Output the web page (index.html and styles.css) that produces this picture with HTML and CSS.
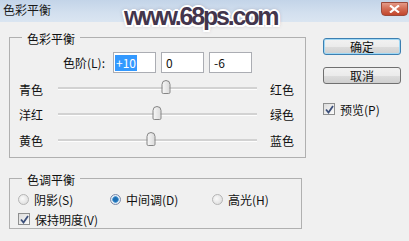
FILE: index.html
```html
<!DOCTYPE html>
<html lang="zh-CN">
<head>
    <meta charset="UTF-8">
    <title>色彩平衡</title>
    <link rel="stylesheet" href="styles.css">
</head>
<body>
    <div class="window">
        <div class="titlebar">
            <span class="title">色彩平衡</span>
            <button class="close-btn" aria-label="关闭">
                <svg width="11" height="8" viewBox="0 0 11 8"><path d="M1 0.5 L10 7.5 M10 0.5 L1 7.5" stroke="#fff" stroke-width="2.2"/></svg>
            </button>
        </div>
        <div class="watermark">www.68ps.com</div>

        <div class="main">
            <div class="left-col">
                <fieldset class="group group-color">
                    <legend>色彩平衡</legend>
                    <div class="levels-row">
                        <span class="levels-label">色阶(L):</span>
                        <div class="field"><span class="selected">+10</span></div>
                        <div class="field">0</div>
                        <div class="field">-6</div>
                    </div>

                    <div class="slider-row">
                        <span class="slider-label">青色</span>
                        <div class="track"><span class="thumb" style="left: 54.3%"></span></div>
                        <span class="slider-label right">红色</span>
                    </div>
                    <div class="slider-row">
                        <span class="slider-label">洋红</span>
                        <div class="track"><span class="thumb" style="left: 49.7%"></span></div>
                        <span class="slider-label right">绿色</span>
                    </div>
                    <div class="slider-row">
                        <span class="slider-label">黄色</span>
                        <div class="track"><span class="thumb" style="left: 46.7%"></span></div>
                        <span class="slider-label right">蓝色</span>
                    </div>
                </fieldset>

                <fieldset class="group group-tone">
                    <legend>色调平衡</legend>
                    <div class="radio-row">
                        <label class="radio-item shadows"><span class="radio"></span>阴影(S)</label>
                        <label class="radio-item midtones"><span class="radio checked"></span>中间调(D)</label>
                        <label class="radio-item"><span class="radio"></span>高光(H)</label>
                    </div>
                    <label class="check-row">
                        <span class="checkbox"><svg width="9" height="9" viewBox="0 0 9 9"><path d="M1 4.5 L3.5 7.5 L8 1" fill="none" stroke="#3c4f7a" stroke-width="1.8"/></svg></span>保持明度(V)
                    </label>
                </fieldset>
            </div>

            <div class="right-col">
                <button class="btn btn-default">确定</button>
                <button class="btn">取消</button>
                <label class="check-row preview">
                    <span class="checkbox"><svg width="9" height="9" viewBox="0 0 9 9"><path d="M1 4.5 L3.5 7.5 L8 1" fill="none" stroke="#3c4f7a" stroke-width="1.8"/></svg></span>预览(P)
                </label>
            </div>
        </div>
    </div>
</body>
</html>
```

FILE: styles.css
```css
body {
    margin: 0;
    font-family: "Noto Sans CJK SC", "Liberation Sans", sans-serif;
    font-size: 12px;
    color: #111;
}
.window {
    position: relative;
    width: 409px;
    height: 241px;
    background: #f0f0f0;
    overflow: hidden;
}
.titlebar {
    display: flex;
    align-items: flex-start;
    height: 22px;
    padding-left: 3px;
    background: linear-gradient(#c3d4e8, #d3e0ef 60%, #dae5f1);
    box-sizing: border-box;
}
.title {
    line-height: 20px;
    color: #1a1a1a;
}
.close-btn {
    margin-left: auto;
    margin-top: 2px;
    margin-right: 1px;
    width: 27px;
    height: 14px;
    padding: 0;
    border: 1px solid #9b4a3c;
    border-radius: 0 0 4px 4px;
    background: linear-gradient(#e49a88, #d26a52 50%, #c2462c);
    display: flex;
    align-items: center;
    justify-content: center;
}
.watermark {
    position: absolute;
    top: 3px;
    left: 124px;
    font-family: "Liberation Sans", sans-serif;
    font-weight: bold;
    font-size: 25px;
    letter-spacing: -2.2px;
    line-height: 26px;
    color: #43354c;
    text-shadow:
        2px 0 #fff, -2px 0 #fff, 0 2px #fff, 0 -2px #fff,
        1.5px 1.5px #fff, -1.5px 1.5px #fff, 1.5px -1.5px #fff, -1.5px -1.5px #fff,
        0 0 4px rgba(70, 60, 80, 0.7);
}

.main {
    display: flex;
    padding-left: 9px;
}
.left-col {
    width: 297px;
}
.group {
    margin: 6px 0 0;
    padding: 0;
    border: 1px solid #b0b0b0;
    min-width: 0;
}
.group legend {
    margin-left: 12px;
    padding: 4px 5px 0;
    line-height: 14px;
}
.group-tone {
    margin-top: 11px;
    width: 293px;
    box-sizing: border-box;
    padding-bottom: 1px;
}

.levels-row {
    display: flex;
    align-items: center;
    gap: 5px;
    margin-top: 6px;
}
.levels-label {
    width: 95px;
    padding-right: 8px;
    margin-right: -5px;
    text-align: right;
}
.field {
    width: 43px;
    height: 21px;
    box-sizing: border-box;
    border: 1px solid #abadb3;
    background: #fff;
    padding: 1px 0 0 4px;
    line-height: 17px;
}
.field .selected {
    display: inline-block;
    margin-left: -3px;
    padding: 0 1px;
    background: #3399ff;
    color: #fff;
    line-height: 16px;
}

.slider-row {
    display: flex;
    align-items: center;
    height: 26px;
    padding-left: 9px;
}
.levels-row + .slider-row {
    margin-top: 4px;
    height: 25px;
}
.slider-row:last-child {
    margin-bottom: 3px;
}
.slider-label {
    width: 39px;
    line-height: 14px;
}
.slider-label.right {
    width: auto;
    margin-left: 13px;
}
.track {
    position: relative;
    width: 199px;
    height: 2px;
    margin-top: -2px;
    background: #d2d2d2;
    border-bottom: 1px solid #fdfdfd;
}
.thumb {
    position: absolute;
    top: -7px;
    width: 9px;
    height: 14px;
    transform: translateX(-50%);
    box-sizing: border-box;
    border: 1px solid #858585;
    border-radius: 5px 5px 2px 2px;
    background: linear-gradient(90deg, #f6f6f6, #dcdcdc);
}

.radio-row {
    display: flex;
    align-items: center;
    margin-top: 4px;
    padding-left: 8px;
    height: 16px;
}
.radio-item {
    display: flex;
    align-items: center;
    gap: 5px;
}
.radio-item.shadows {
    width: 92px;
}
.radio-item.midtones {
    width: 102px;
}
.radio {
    width: 11px;
    height: 11px;
    box-sizing: border-box;
    border: 1px solid #b5b5b5;
    border-radius: 50%;
    background: radial-gradient(circle at 40% 40%, #fafafa, #d8d8d8);
}
.radio.checked {
    border-color: #7c8aa8;
    background: radial-gradient(circle, #1e6fb4 0 2px, #5aa2d8 3px, #e6eef6 3.6px, #d0d8e2);
}
.check-row {
    display: flex;
    align-items: center;
    gap: 5px;
    height: 16px;
    margin-top: 4px;
    padding-left: 8px;
}
.checkbox {
    display: flex;
    align-items: center;
    justify-content: center;
    width: 12px;
    height: 12px;
    box-sizing: border-box;
    border: 1px solid #8e8f8f;
    background: linear-gradient(135deg, #dcdcdc, #fbfbfb);
}

.right-col {
    display: flex;
    flex-direction: column;
    margin-left: 17px;
    margin-top: 16px;
    width: 78px;
}
.btn {
    height: 17px;
    padding: 0;
    border: 1px solid #707070;
    border-radius: 3px;
    background: linear-gradient(#f2f2f2, #ebebeb 50%, #dddddd 51%, #cfcfcf);
    font-family: inherit;
    font-size: 12px;
    line-height: 14px;
    color: #111;
}
.btn + .btn {
    margin-top: 12px;
}
.btn-default {
    border-color: #3c7fb1;
    box-shadow: inset 0 0 0 1px #9fd8f5;
}
.check-row.preview {
    margin-top: 17px;
    padding-left: 0;
}
```
